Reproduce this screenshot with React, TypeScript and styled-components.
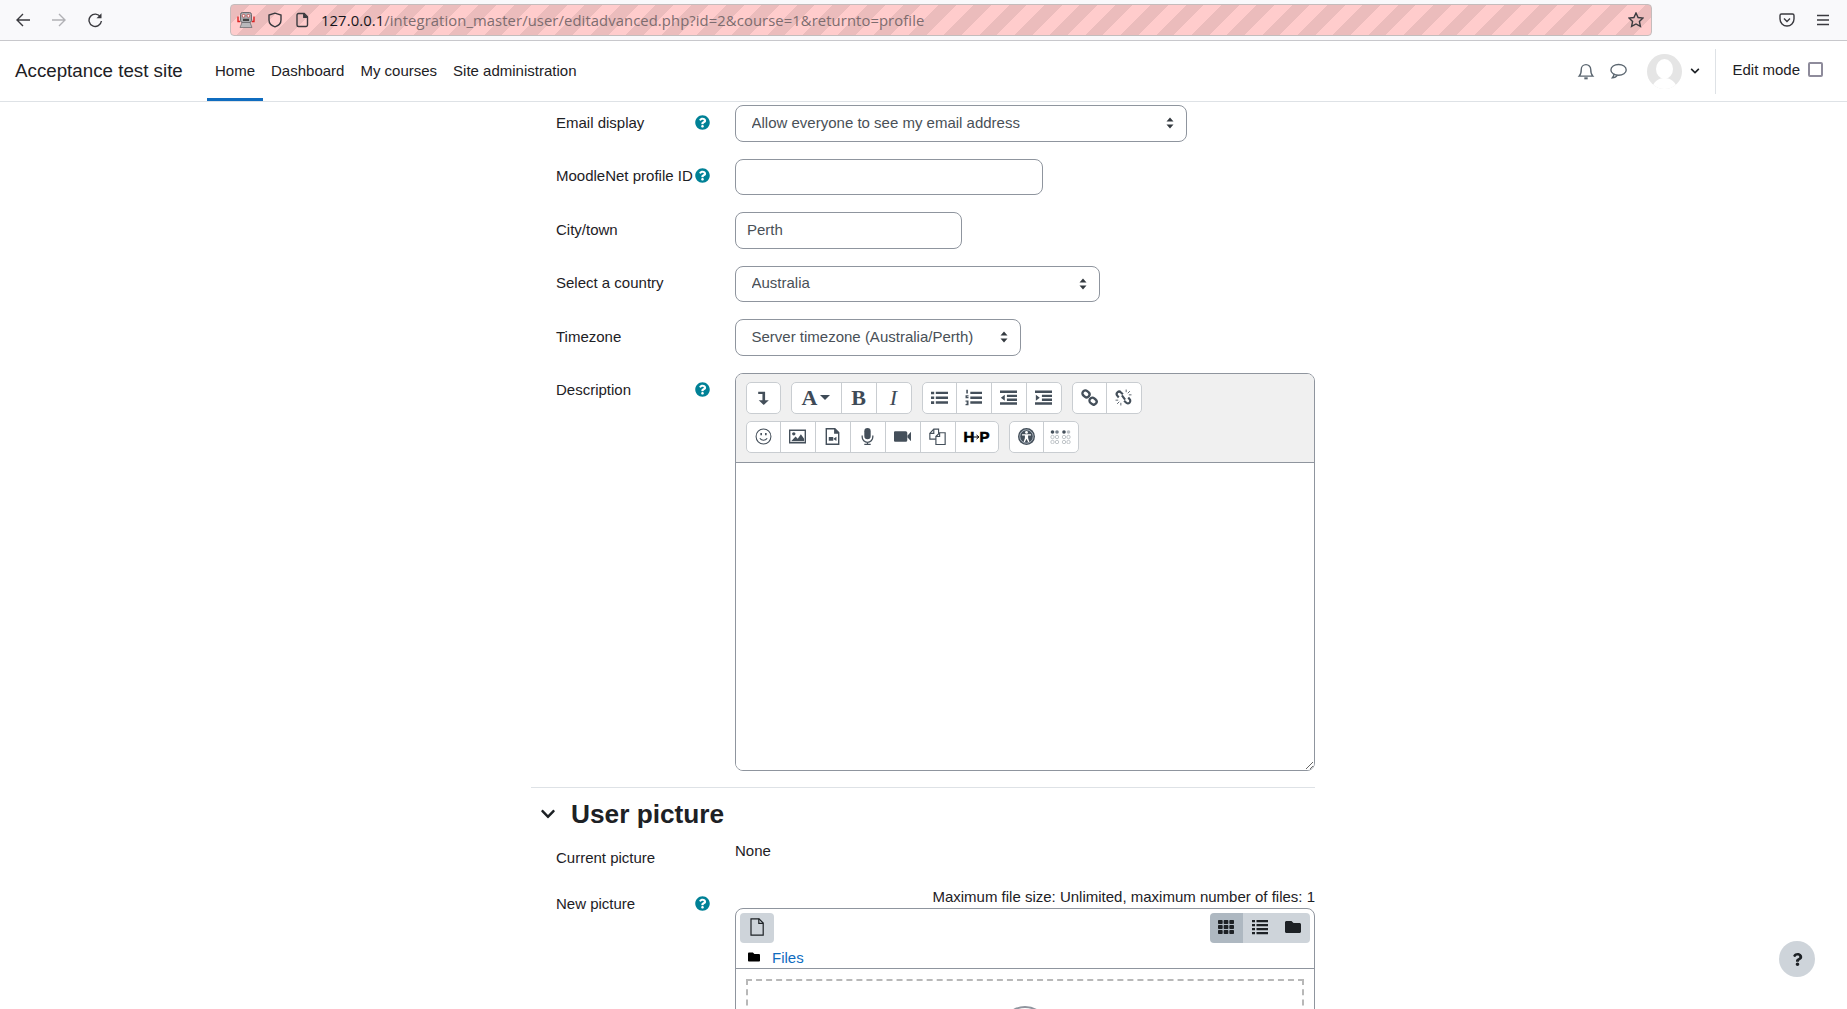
import React from "react";
import styled, { createGlobalStyle } from "styled-components";
import { FaChevronDown, FaFolder, FaQuestion, FaQuestionCircle, FaTh } from "react-icons/fa";

const GlobalStyle = createGlobalStyle`
  html, body {
    margin: 0;
    height: 100%;
    overflow: hidden;
    background: #fff;
    color: #1d2125;
    font-family: "Liberation Sans", Arial, sans-serif;
    font-size: 15px;
  }
  * { box-sizing: border-box; }
`;

const Page = styled.div`
  position: relative;
  height: 100vh;
  overflow: hidden;
`;

/* browser chrome */
const Chrome = styled.div`
  height: 41px;
  background: #f9f9fb;
  border-bottom: 1px solid #c8c8cc;
  display: flex;
  align-items: center;
  padding-left: 15px;
`;

const ChromeButtons = styled.div`
  display: flex;
  gap: 20px;
  width: 215px;
`;

const ChromeIcon = styled.svg<{ $muted?: boolean }>`
  width: 16px;
  height: 16px;
  flex: none;
  fill: none;
  stroke: ${(p) => (p.$muted ? "#b1b1b5" : "#3a3a3f")};
  stroke-width: 1.4;
`;

const UrlBar = styled.div`
  width: 1422px;
  height: 32px;
  border: 1px solid #c4bcbc;
  border-radius: 4px;
  display: flex;
  align-items: center;
  gap: 12px;
  padding: 0 7px 0 6px;
  background: repeating-linear-gradient(-45deg, #ffcccc 0 12.5px, #ebbcbc 12.5px 25px);
`;

const UrlText = styled.div`
  flex: 1;
  margin-left: -2px;
  font-family: "Open Sans", sans-serif;
  font-size: 14.8px;
  letter-spacing: 0.09px;
  color: #7d6c6f;
  white-space: nowrap;
  b {
    font-weight: 400;
    color: #15141a;
  }
`;

const ChromeRight = styled.div`
  display: flex;
  align-items: center;
  gap: 20px;
  margin-left: 127px;
`;

/* moodle navbar */
const NavBar = styled.nav`
  height: 61px;
  border-bottom: 1px solid #dee2e6;
  display: flex;
  align-items: stretch;
  padding-left: 15px;
`;

const Brand = styled.a`
  width: 192px;
  font-size: 18.75px;
  align-self: center;
`;

const NavItem = styled.a<{ $active?: boolean }>`
  display: flex;
  align-items: center;
  padding: 1px 8px 0;
  border-bottom: 3px solid ${(p) => (p.$active ? "#0f6cbf" : "transparent")};
`;

const NavRight = styled.div`
  margin-left: auto;
  display: flex;
  align-items: center;
  padding-right: 24px;
`;

const NavIcon = styled.svg`
  width: 18px;
  height: 18px;
  fill: none;
  stroke: #5b6670;
  stroke-width: 1.2;
  margin-right: 14px;
`;

const Avatar = styled.svg`
  width: 35px;
  height: 35px;
  margin-left: 6px;
  border-radius: 50%;
`;

const UserCaret = styled(FaChevronDown)`
  width: 10px;
  height: 10px;
  color: #1d2125;
  margin: 0 15px 0 8px;
`;

const EditMode = styled.div`
  height: 45px;
  border-left: 1px solid #dee2e6;
  padding-left: 16px;
  display: flex;
  align-items: center;
  gap: 8px;
  padding-bottom: 4px;
`;

const CheckBox = styled.span`
  width: 15px;
  height: 15px;
  flex: none;
  border: 2px solid #8e8b9b;
  border-radius: 2px;
`;

/* form */
const Content = styled.main`
  width: 785px;
  margin-left: 530px;
  padding-top: 3px;
`;

const Row = styled.div<{ $gap?: number }>`
  display: grid;
  grid-template-columns: 205px 580px;
  margin-bottom: ${(p) => p.$gap ?? 17}px;
`;

const LabelCell = styled.div<{ $lower?: boolean }>`
  height: 36.5px;
  padding: 0 25px ${(p) => (p.$lower ? 0 : 2)}px 26px;
  display: flex;
  align-items: center;
  justify-content: space-between;
  white-space: nowrap;
`;

const Help = styled(FaQuestionCircle)`
  width: 15px;
  height: 15px;
  color: #008196;
  flex: none;
`;

const Select = styled.select<{ $width: number }>`
  appearance: none;
  display: block;
  width: ${(p) => p.$width}px;
  height: 36.5px;
  padding: 0 32px 2px 15.5px;
  border: 1px solid #8f959e;
  border-radius: 8px;
  color: #495057;
  font: inherit;
  background: #fff
    url("data:image/svg+xml,%3Csvg xmlns='http://www.w3.org/2000/svg' width='8' height='12'%3E%3Cpath fill='%23343a40' d='M4 0.5 7.5 4.6H.5zM4 11.5.5 7.4h7z'/%3E%3C/svg%3E")
    no-repeat right 12px center;
`;

const TextInput = styled.input<{ $width: number }>`
  display: block;
  width: ${(p) => p.$width}px;
  height: 36.5px;
  padding: 0 11px 2px;
  border: 1px solid #8f959e;
  border-radius: 8px;
  color: #495057;
  font: inherit;
`;

const Editor = styled.div`
  height: 398px;
  border: 1px solid #8f959e;
  border-radius: 8px;
  overflow: hidden;
  display: flex;
  flex-direction: column;
`;

const EditorToolbar = styled.div`
  background: #f0f0f0;
  border-bottom: 1px solid #8f959e;
  height: 89px;
  flex: none;
  padding: 8px 0 0 9.5px;
  display: flex;
  flex-direction: column;
  gap: 6.5px;
`;

const ToolRow = styled.div`
  display: flex;
  gap: 10px;
`;

const ToolGroup = styled.div`
  display: flex;
  height: 32.5px;
  background: #fff;
  border: 1px solid #c9cdd1;
  border-radius: 5px;
`;

const ToolButton = styled.div<{ $width?: number }>`
  width: ${(p) => p.$width ?? 35}px;
  display: flex;
  align-items: center;
  justify-content: center;
  gap: 3px;
  color: #3e4a57;
  &:first-child {
    width: ${(p) => (p.$width ?? 35) - 2}px;
  }
  & + & {
    border-left: 1px solid #c9cdd1;
  }
`;

const ToolIcon = styled.svg<{ $wide?: boolean }>`
  width: ${(p) => (p.$wide ? 21 : 17)}px;
  height: ${(p) => (p.$wide ? 14 : 17)}px;
  fill: #444f5a;
  stroke: none;
`;

const SerifGlyph = styled.span<{ $size?: number; $italic?: boolean }>`
  font-family: "Liberation Serif", serif;
  font-weight: ${(p) => (p.$italic ? 400 : 700)};
  font-style: ${(p) => (p.$italic ? "italic" : "normal")};
  font-size: ${(p) => p.$size ?? 22}px;
  line-height: 1;
`;

const FontCaret = styled.span`
  width: 0;
  height: 0;
  border-left: 5.5px solid transparent;
  border-right: 5.5px solid transparent;
  border-top: 5.5px solid #3e4a57;
`;

const H5pMark = styled.span`
  display: flex;
  align-items: center;
  font-weight: 700;
  font-size: 15px;
  color: #000;
  -webkit-text-stroke: 0.6px #000;
  svg {
    width: 7px;
    height: 8px;
    margin: 0 -1px;
  }
`;

const EditorArea = styled.textarea`
  flex: 1;
  display: block;
  width: 100%;
  border: 0;
  outline: 0;
  padding: 0;
  background: #fff;
  resize: vertical;
`;

const Divider = styled.hr`
  border: 0;
  border-top: 1px solid #dee2e6;
  margin: 0 0 0 1px;
`;

const SectionHead = styled.h3`
  margin: 0;
  padding: 11px 0 9.5px 10px;
  display: flex;
  align-items: center;
  gap: 15px;
  font-size: 26.25px;
  line-height: 31.5px;
  font-weight: 700;
`;

const SectionCaret = styled(FaChevronDown)`
  width: 16px;
  height: 16px;
`;

const StaticValue = styled.div`
  line-height: 22.5px;
`;

const FileLimits = styled.div`
  line-height: 22.5px;
  text-align: right;
`;

const FileManager = styled.div`
  height: 200px;
  border: 1px solid #8f959e;
  border-radius: 8px;
`;

const FileToolbar = styled.div`
  display: flex;
  justify-content: space-between;
  padding: 4px 4px 0 4px;
`;

const GreyButton = styled.div<{ $active?: boolean; $width: number }>`
  width: ${(p) => p.$width}px;
  height: 30px;
  display: flex;
  align-items: center;
  justify-content: center;
  padding-bottom: 2px;
  color: #1d2125;
  background: ${(p) => (p.$active ? "#aeb8c1" : "#ced4da")};
  svg {
    width: 16px;
    height: 16px;
  }
`;

const AddFile = styled(GreyButton)`
  border-radius: 4px;
  svg {
    width: 16px;
    height: 18px;
  }
`;

const ViewGroup = styled.div`
  display: flex;
  border-radius: 4px;
  overflow: hidden;
`;

const FilePath = styled.div`
  height: 26px;
  padding: 3px 0 0 12px;
  display: flex;
  align-items: center;
  gap: 12px;
  border-bottom: 1px solid #8f959e;
  color: #0f6cbf;
  svg {
    width: 12px;
    height: 12px;
    color: #000;
  }
`;

const DropZone = styled.div`
  margin: 10px 10px 0;
  height: 140px;
  border: 2px dashed #b8b8b8;
  display: flex;
  justify-content: center;
  padding-top: 25px;
`;

const DropCircle = styled.span`
  width: 48px;
  height: 48px;
  border: 2px solid #8f959e;
  border-radius: 50%;
`;

const HelpBubble = styled.div`
  position: absolute;
  left: 1779px;
  top: 941px;
  width: 36px;
  height: 36px;
  border-radius: 50%;
  background: #ced4da;
  display: flex;
  align-items: center;
  justify-content: center;
  svg {
    width: 13px;
    height: 13px;
    color: #1d2125;
  }
`;

const tool = (body: React.ReactNode) => (
  <ToolIcon viewBox="0 0 16 16">{body}</ToolIcon>
);

const RobotIcon = () => (
  <svg width="18" height="18" viewBox="0 0 18 18">
    <rect x="3.5" y="1.5" width="11" height="10" rx="2" fill="#a9a9ad" stroke="#55555a" strokeWidth="0.8" />
    <circle cx="6.6" cy="4.8" r="1.4" fill="#fff" stroke="#c33" strokeWidth="0.7" />
    <circle cx="11.4" cy="4.8" r="1.4" fill="#fff" stroke="#c33" strokeWidth="0.7" />
    <rect x="6" y="7.8" width="6" height="2.2" fill="#444" />
    <path d="M1 5.5v5h2M17 5.5v5h-2" fill="none" stroke="#d22" strokeWidth="1.4" />
    <path d="M3 16.5l2-5h8l2 5z" fill="#b9b9bc" stroke="#66666a" strokeWidth="0.7" />
  </svg>
);

const App: React.FC = () => {
  return (
    <Page>
      <GlobalStyle />
      <Chrome>
        <ChromeButtons>
          <ChromeIcon viewBox="0 0 16 16">
            <path d="M15 8H2M8 2 2 8l6 6" />
          </ChromeIcon>
          <ChromeIcon viewBox="0 0 16 16" $muted>
            <path d="M1 8h13M8 2l6 6-6 6" />
          </ChromeIcon>
          <ChromeIcon viewBox="0 0 16 16">
            <path d="M13.5 5A6.2 6.2 0 1 0 14.4 9" />
            <path d="M14.5 1.2v5h-5z" fill="#3a3a3f" stroke="none" />
          </ChromeIcon>
        </ChromeButtons>
        <UrlBar>
          <RobotIcon />
          <ChromeIcon viewBox="0 0 16 16">
            <path d="M8 1.2 2 3v5c0 3.4 2.8 5.8 6 6.8 3.2-1 6-3.4 6-6.8V3z" />
          </ChromeIcon>
          <ChromeIcon viewBox="0 0 16 16">
            <path d="M3.5 1.5h5.7l3.3 3.3v8.2a1.5 1.5 0 0 1-1.5 1.5h-7.5A1.5 1.5 0 0 1 2 13V3a1.5 1.5 0 0 1 1.5-1.5z" />
            <path d="M8.8 1.5v3.7h3.7" fill="#3a3a3f" />
          </ChromeIcon>
          <UrlText>
            <b>127.0.0.1</b>/integration_master/user/editadvanced.php?id=2&amp;course=1&amp;returnto=profile
          </UrlText>
          <ChromeIcon viewBox="0 0 16 16">
            <path d="m8 1 2.100 4.500 4.900.6-3.600 3.400 1 4.900L8 12l-4.400 2.400 1-4.900L1 6.100l4.900-.6z" />
          </ChromeIcon>
        </UrlBar>
        <ChromeRight>
          <ChromeIcon viewBox="0 0 16 16">
            <path d="M2.500 2h11A1.500 1.500 0 0 1 15 3.500V7A7 7 0 0 1 1 7V3.500A1.500 1.500 0 0 1 2.500 2z" />
            <path d="m5 6.500 3 3 3-3" />
          </ChromeIcon>
          <ChromeIcon viewBox="0 0 16 16">
            <path d="M2 3.500h12M2 8h12M2 12.500h12" />
          </ChromeIcon>
        </ChromeRight>
      </Chrome>

      <NavBar>
        <Brand>Acceptance test site</Brand>
        <NavItem $active>Home</NavItem>
        <NavItem>Dashboard</NavItem>
        <NavItem>My courses</NavItem>
        <NavItem>Site administration</NavItem>
        <NavRight>
          <NavIcon viewBox="0 0 16 16">
            <path d="M2 12.500c1.500-1.500 1.800-3 1.800-6a4.200 4.200 0 0 1 8.400 0c0 3 .3 4.500 1.800 6z" />
            <path d="M6.500 14.500h3" strokeWidth="1.800" />
          </NavIcon>
          <NavIcon viewBox="0 0 16 16">
            <ellipse cx="8.500" cy="7" rx="6.800" ry="4.800" />
            <path d="M4.500 10.500c0 1.500-.6 2.500-1.500 3.500 2 0 3.500-.8 4.500-2.300" />
          </NavIcon>
          <Avatar viewBox="0 0 35 35">
            <rect width="35" height="35" fill="#e5e5e5" />
            <ellipse cx="17.500" cy="15" rx="8.500" ry="10" fill="#fff" />
            <path d="M5 35c1-7 6-11 12.500-11S29 28 30 35z" fill="#fff" />
          </Avatar>
          <UserCaret />
          <EditMode>
            Edit mode
            <CheckBox />
          </EditMode>
        </NavRight>
      </NavBar>

      <Content>
        <Row>
          <LabelCell>
            Email display
            <Help />
          </LabelCell>
          <div>
            <Select $width={452} defaultValue="all">
              <option value="all">Allow everyone to see my email address</option>
            </Select>
          </div>
        </Row>
        <Row>
          <LabelCell>
            MoodleNet profile ID
            <Help />
          </LabelCell>
          <div>
            <TextInput $width={308} />
          </div>
        </Row>
        <Row>
          <LabelCell>City/town</LabelCell>
          <div>
            <TextInput $width={227} defaultValue="Perth" />
          </div>
        </Row>
        <Row>
          <LabelCell>Select a country</LabelCell>
          <div>
            <Select $width={365} defaultValue="au">
              <option value="au">Australia</option>
            </Select>
          </div>
        </Row>
        <Row>
          <LabelCell>Timezone</LabelCell>
          <div>
            <Select $width={286} defaultValue="server">
              <option value="server">Server timezone (Australia/Perth)</option>
            </Select>
          </div>
        </Row>
        <Row $gap={16}>
          <LabelCell>
            Description
            <Help />
          </LabelCell>
          <Editor>
            <EditorToolbar>
              <ToolRow>
                <ToolGroup>
                  <ToolButton>
                    {tool(<path d="M3 2.500h6.500v8H13L8.200 15 3.500 10.500H7V4.800H3z" />)}
                  </ToolButton>
                </ToolGroup>
                <ToolGroup>
                  <ToolButton $width={51}>
                    <SerifGlyph>A</SerifGlyph>
                    <FontCaret />
                  </ToolButton>
                  <ToolButton>
                    <SerifGlyph>B</SerifGlyph>
                  </ToolButton>
                  <ToolButton>
                    <SerifGlyph $italic>I</SerifGlyph>
                  </ToolButton>
                </ToolGroup>
                <ToolGroup>
                  <ToolButton>
                    {tool(
                      <path d="M0 2.500h3v2.500H0zM0 7h3v2.500H0zM0 11.500h3V14H0zM4.500 2.500H16v2.300H4.500zM4.500 7H16v2.300H4.500zM4.500 11.500H16v2.300H4.500z" />
                    )}
                  </ToolButton>
                  <ToolButton>
                    {tool(
                      <path d="M1.200.8h1.500v3.500H1.200zM.5 5.800h2.800V7H1.800v.6h1.500v1.200H.5zM.5 10.800h2.800v4.400H.5v-1H2v-.6H1.200v-1H2v-.6H.5zM5 2.500h11v2.300H5zM5 7h11v2.300H5zM5 11.500h11v2.300H5z" />
                    )}
                  </ToolButton>
                  <ToolButton>
                    {tool(
                      <path d="M0 1.500h16v2.300H0zM6.500 5.300H16v2.200H6.500zM6.500 9H16v2.200H6.500zM0 12.500h16v2.300H0zM4.500 5.300v5.700L.8 8.200z" />
                    )}
                  </ToolButton>
                  <ToolButton>
                    {tool(
                      <path d="M0 1.500h16v2.300H0zM6.500 5.300H16v2.200H6.500zM6.500 9H16v2.200H6.500zM0 12.500h16v2.300H0zM.8 5.300v5.700l3.700-2.800z" />
                    )}
                  </ToolButton>
                </ToolGroup>
                <ToolGroup>
                  <ToolButton>
                    {tool(
                      <g fill="none" stroke="#444f5a" strokeWidth="2.200">
                        <rect x="1.200" y="1.800" width="7" height="5.500" rx="2.700" transform="rotate(40 4.700 4.500)" />
                        <rect x="7.800" y="8.700" width="7" height="5.500" rx="2.700" transform="rotate(40 11.300 11.500)" />
                      </g>
                    )}
                  </ToolButton>
                  <ToolButton>
                    {tool(
                      <g fill="none" stroke="#444f5a">
                        <path d="M3.500 8 2.200 6.300A2.300 2.300 0 0 1 5.600 3.200l1.800 1.700M12.500 8l1.300 1.700a2.300 2.300 0 0 1-3.400 3.100l-1.800-1.700M6.500 6l3 4" strokeWidth="2" />
                        <path d="M10.500.5v2.500M14 2l-2 2M15.500 5.500H13M.5 10.500H3M2 14l2-2M5.500 15.500V13" strokeWidth="0.800" />
                      </g>
                    )}
                  </ToolButton>
                </ToolGroup>
              </ToolRow>
              <ToolRow>
                <ToolGroup>
                  <ToolButton>
                    {tool(
                      <g fill="none" stroke="#444f5a">
                        <circle cx="8" cy="8" r="7" />
                        <path d="M4.500 9.800c2 2.400 5 2.400 7 0" />
                        <path d="M5.800 4.800v2M10.200 4.800v2" strokeWidth="1.500" />
                      </g>
                    )}
                  </ToolButton>
                  <ToolButton>
                    {tool(
                      <>
                        <path d="M0 1.500h16v13H0zM1.300 2.800v10.400h13.400V2.800z" />
                        <circle cx="4.500" cy="5.500" r="1.600" />
                        <path d="M2 12.500l4.200-4.500 2 2 3-4.200 3 4.200v2.500z" />
                      </>
                    )}
                  </ToolButton>
                  <ToolButton>
                    {tool(
                      <>
                        <path d="M1.500 0h9l4 4v12h-13zM2.800 1.300v13.400h10.400V5.300H9.500v-4z" />
                        <path d="M4.500 8.500h4.200v3.500H4.500zM9.200 9.800l2.500-1.500v3.900L9.200 10.700z" />
                      </>
                    )}
                  </ToolButton>
                  <ToolButton>
                    {tool(
                      <>
                        <rect x="5" y="0" width="6" height="10.500" rx="3" />
                        <path d="M3 7v1.500a5 5 0 0 0 10 0V7M8 13.500V15.500M5 15.500h6" fill="none" stroke="#444f5a" strokeWidth="1.200" />
                      </>
                    )}
                  </ToolButton>
                  <ToolButton>
                    {tool(<path d="M1 3h10a1.500 1.500 0 0 1 1.500 1.500v7A1.500 1.500 0 0 1 11 13H1a1 1 0 0 1-1-1V4a1 1 0 0 1 1-1zM12.800 7 16 3.500v9L12.800 9z" />)}
                  </ToolButton>
                  <ToolButton>
                    {tool(
                      <g fill="#fff" stroke="#444f5a" strokeWidth="1.100">
                        <path d="M.8 5 4.500 1H9v9.500H.8z" />
                        <path d="M4.500 1v4H.8" fill="none" />
                        <path d="M6.500 8 10 4.500h5.200v11H6.500z" />
                        <path d="M10 4.500V8H6.500" fill="none" />
                      </g>
                    )}
                  </ToolButton>
                  <ToolButton $width={43}>
                    <H5pMark>
                      H
                      <svg viewBox="0 0 7 8">
                        <path d="M0 4h5M3.500 2 6 4 3.500 6" fill="none" stroke="#000" strokeWidth="1" />
                      </svg>
                      P
                    </H5pMark>
                  </ToolButton>
                </ToolGroup>
                <ToolGroup>
                  <ToolButton>
                    {tool(
                      <>
                        <circle cx="8" cy="8" r="8" />
                        <circle cx="8" cy="8" r="6.300" fill="none" stroke="#c9d3dc" strokeWidth="0.700" />
                        <circle cx="8" cy="4.200" r="1.300" fill="#fff" />
                        <path d="M3.800 5.800h8.400v1.200H9.500v2.500l1.200 3.700H9.500L8 10.200l-1.500 3H5.300l1.200-3.700V7H3.800z" fill="#fff" />
                      </>
                    )}
                  </ToolButton>
                  <ToolButton>
                    <ToolIcon viewBox="0 0 21 14" $wide>
                      <circle cx="2.500" cy="2" r="1.800" />
                      <circle cx="7" cy="2" r="1.800" fill="#7a848e" />
                      <circle cx="14" cy="2" r="1.800" />
                      <circle cx="18.500" cy="2" r="1.800" fill="#b9bec3" />
                      <g fill="none" stroke="#b9bec3" strokeWidth="0.900">
                        <circle cx="2.500" cy="7" r="1.700" />
                        <circle cx="7" cy="7" r="1.700" />
                        <circle cx="14" cy="7" r="1.700" />
                        <circle cx="18.500" cy="7" r="1.700" />
                        <circle cx="2.500" cy="12" r="1.700" />
                        <circle cx="7" cy="12" r="1.700" />
                        <circle cx="14" cy="12" r="1.700" />
                        <circle cx="18.500" cy="12" r="1.700" />
                      </g>
                    </ToolIcon>
                  </ToolButton>
                </ToolGroup>
              </ToolRow>
            </EditorToolbar>
            <EditorArea />
          </Editor>
        </Row>

        <Divider />
        <SectionHead>
          <SectionCaret />
          User picture
        </SectionHead>

        <Row $gap={9.5}>
          <LabelCell $lower>Current picture</LabelCell>
          <StaticValue>None</StaticValue>
        </Row>
        <Row>
          <LabelCell $lower>
            New picture
            <Help />
          </LabelCell>
          <div>
            <FileLimits>Maximum file size: Unlimited, maximum number of files: 1</FileLimits>
            <FileManager>
              <FileToolbar>
                <AddFile $width={34}>
                  <svg viewBox="0 0 16 18" fill="none" stroke="#1d2125" strokeWidth="1.200">
                    <path d="M2 .8h8l4.200 4.200v12.200H2z" />
                    <path d="M9.800.8v4.500h4.400" />
                  </svg>
                </AddFile>
                <ViewGroup>
                  <GreyButton $width={33.5} $active>
                    <FaTh />
                  </GreyButton>
                  <GreyButton $width={33.5}>
                    <svg viewBox="0 0 16 16" fill="#1d2125">
                      <path d="M0 1h3v2.200H0zM0 5h3v2.200H0zM0 9h3v2.200H0zM0 13h3v2.200H0zM4.500 1H16v2.200H4.500zM4.500 5H16v2.200H4.500zM4.500 9H16v2.200H4.500zM4.500 13H16v2.200H4.500z" />
                    </svg>
                  </GreyButton>
                  <GreyButton $width={33.5}>
                    <FaFolder />
                  </GreyButton>
                </ViewGroup>
              </FileToolbar>
              <FilePath>
                <FaFolder />
                Files
              </FilePath>
              <DropZone>
                <DropCircle />
              </DropZone>
            </FileManager>
          </div>
        </Row>
      </Content>

      <HelpBubble>
        <FaQuestion />
      </HelpBubble>
    </Page>
  );
};

export default App;
